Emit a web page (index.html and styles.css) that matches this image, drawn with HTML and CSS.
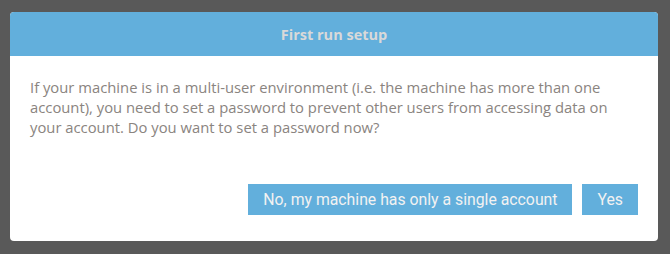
FILE: index.html
```html
<!DOCTYPE html>
<html>
<head>
<meta charset="utf-8">
<link rel="stylesheet" href="styles.css">
</head>
<body>
<div class="dialog">
  <div class="dialog-header">First run setup</div>
  <div class="dialog-body">
    <p class="message">If your machine is in a multi-user environment (i.e. the machine has more than one account), you need to set a password to prevent other users from accessing data on your account. Do you want to set a password now?</p>
  </div>
  <div class="dialog-actions">
    <button class="btn">No, my machine has only a single account</button>
    <button class="btn">Yes</button>
  </div>
</div>
</body>
</html>
```

FILE: styles.css
```css
html, body {
  margin: 0;
  padding: 0;
  background: #595959;
  width: 670px;
  height: 254px;
  overflow: hidden;
}
body {
  padding: 12px 12px 0 10px;
  box-sizing: border-box;
}
.dialog {
  width: 648px;
  height: 229px;
  background: #ffffff;
  border-radius: 4px;
  overflow: hidden;
  display: flex;
  flex-direction: column;
}
.dialog-header {
  height: 44px;
  background: #62afdc;
  color: #d9d9d9;
  font-family: "Open Sans", sans-serif;
  font-weight: bold;
  font-size: 14.5px;
  display: flex;
  align-items: center;
  justify-content: center;
}
.dialog-body {
  flex: 1;
  padding: 21px 20px 0 20px;
}
.message {
  margin: 0;
  font-family: "Open Sans", sans-serif;
  font-size: 14.8px;
  line-height: 20px;
  color: #8a8480;
}
.dialog-actions {
  display: flex;
  justify-content: flex-end;
  gap: 10px;
  padding: 0 20px 26px 0;
}
.btn {
  height: 31px;
  border: none;
  border-radius: 0;
  background: #62afdc;
  color: #f2f2f2;
  font-family: Roboto, sans-serif;
  font-size: 15.8px;
  padding: 0 15px;
}
```
